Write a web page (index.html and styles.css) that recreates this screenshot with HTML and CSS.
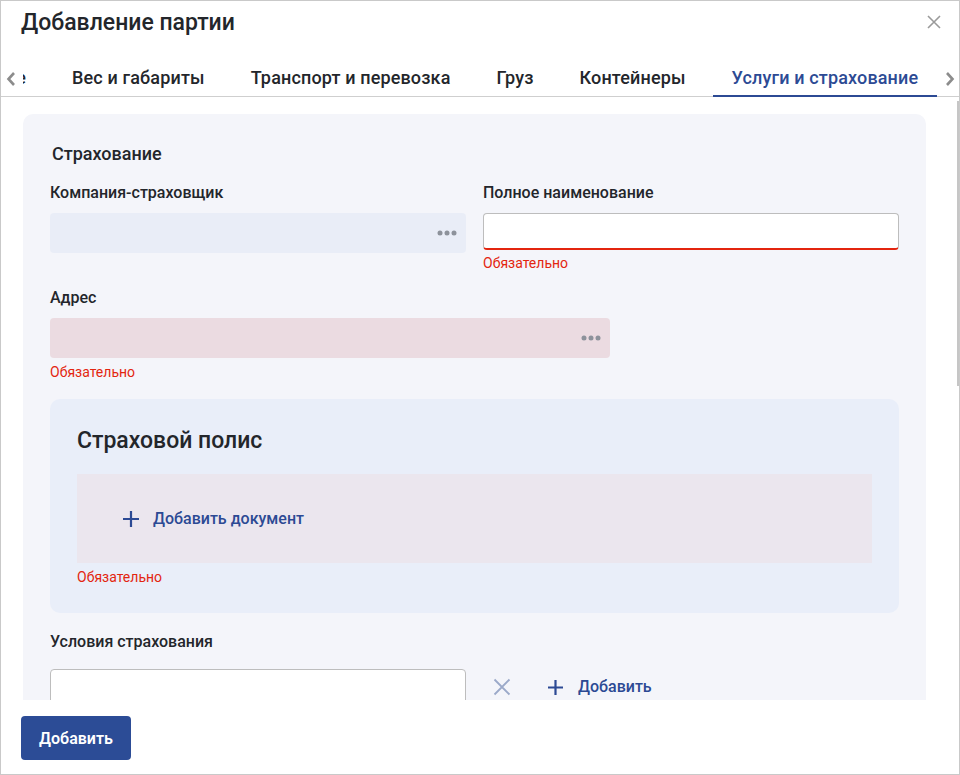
FILE: index.html
```html
<!DOCTYPE html>
<html lang="ru">
<head>
<meta charset="utf-8">
<title>Добавление партии</title>
<link rel="stylesheet" href="styles.css">
</head>
<body>
<div class="dialog">
  <header class="dlg-header">
    <h1 class="dlg-title">Добавление партии</h1>
    <button class="close-btn" aria-label="Закрыть">
      <svg width="14" height="14" viewBox="0 0 14 14"><path d="M1 1L13 13M13 1L1 13" stroke="#9a9a9a" stroke-width="1.6" fill="none"/></svg>
    </button>
  </header>
  <nav class="tabs-row">
    <button class="tab-arrow" aria-label="Назад">
      <svg width="10" height="16" viewBox="0 0 10 16"><path d="M8 2L2.5 8L8 14" stroke="#8c8c8c" stroke-width="2.6" fill="none"/></svg>
    </button>
    <div class="tabs-viewport">
      <div class="tab tab-clipped"><span class="clip-inner">Основное</span></div>
      <div class="tab">Вес и габариты</div>
      <div class="tab">Транспорт и перевозка</div>
      <div class="tab">Груз</div>
      <div class="tab">Контейнеры</div>
      <div class="tab active">Услуги и страхование</div>
    </div>
    <button class="tab-arrow" aria-label="Вперёд">
      <svg width="10" height="16" viewBox="0 0 10 16"><path d="M2 2L7.5 8L2 14" stroke="#8c8c8c" stroke-width="2.6" fill="none"/></svg>
    </button>
  </nav>
  <main class="dlg-body">
    <div class="scroll-thumb"></div>
    <section class="card">
      <h2 class="card-title">Страхование</h2>
      <div class="grid2">
        <div class="field">
          <label class="label">Компания-страховщик</label>
          <div class="picker picker-blue">
            <svg class="dots" width="20" height="6" viewBox="0 0 20 6"><circle cx="3" cy="3" r="2.5" fill="#8d929b"/><circle cx="10" cy="3" r="2.5" fill="#8d929b"/><circle cx="17" cy="3" r="2.5" fill="#8d929b"/></svg>
          </div>
        </div>
        <div class="field">
          <label class="label">Полное наименование</label>
          <div class="text-input text-input-error"></div>
          <div class="error">Обязательно</div>
        </div>
      </div>
      <div class="field field-address">
        <label class="label">Адрес</label>
        <div class="picker picker-pink">
          <svg class="dots" width="20" height="6" viewBox="0 0 20 6"><circle cx="3" cy="3" r="2.5" fill="#8d929b"/><circle cx="10" cy="3" r="2.5" fill="#8d929b"/><circle cx="17" cy="3" r="2.5" fill="#8d929b"/></svg>
        </div>
        <div class="error error-lower">Обязательно</div>
      </div>
      <section class="subcard">
        <h3 class="subcard-title">Страховой полис</h3>
        <div class="dropzone">
          <button class="link-btn">
            <svg width="18" height="18" viewBox="0 0 18 18"><path d="M9 1V17M1 9H17" stroke="#2c4a94" stroke-width="2.2" fill="none"/></svg>
            <span>Добавить документ</span>
          </button>
        </div>
        <div class="error">Обязательно</div>
      </section>
      <div class="field field-terms">
        <label class="label">Условия страхования</label>
        <div class="terms-row">
          <div class="text-input terms-input"></div>
          <button class="icon-btn" aria-label="Удалить">
            <svg width="18" height="18" viewBox="0 0 18 18"><path d="M1.5 1.5L16.5 16.5M16.5 1.5L1.5 16.5" stroke="#9ba9c9" stroke-width="1.8" fill="none"/></svg>
          </button>
          <button class="link-btn link-small">
            <svg width="17" height="17" viewBox="0 0 17 17"><path d="M8.5 1V16M1 8.5H16" stroke="#2c4a94" stroke-width="2.2" fill="none"/></svg>
            <span>Добавить</span>
          </button>
        </div>
      </div>
    </section>
  </main>
  <footer class="dlg-footer">
    <button class="primary-btn">Добавить</button>
  </footer>
</div>
</body>
</html>
```
FILE: styles.css
```css
* { box-sizing: border-box; }
html, body { margin: 0; padding: 0; background: #fff; }
body { font-family: Roboto, "Noto Sans", "Liberation Sans", sans-serif; color: #23262b; }
button { font-family: inherit; background: none; border: 0; padding: 0; cursor: pointer; }

.dialog {
  width: 960px;
  height: 775px;
  border: 1px solid #c9c9c9;
  display: flex;
  flex-direction: column;
  background: #fff;
  overflow: hidden;
}

.dlg-header {
  display: flex;
  align-items: center;
  justify-content: space-between;
  padding: 7px 18px 0 20px;
  height: 36px;
}
.dlg-title {
  margin: 0;
  font-size: 23px;
  line-height: 28px;
  font-weight: 500;
  color: #23262b;
}
.close-btn { width: 14px; height: 14px; display: flex; margin-top: -2px; }

.tabs-row {
  margin-top: 20px;
  height: 40px;
  display: flex;
  align-items: stretch;
  box-shadow: inset 0 -1px 0 #cfcfcf;
}
.tab-arrow {
  width: 20px;
  display: flex;
  align-items: center;
  justify-content: center;
  padding-top: 3px;
}
.tab-arrow:last-child { width: 18px; margin-left: 2px; }
.tabs-viewport {
  flex: 1;
  display: flex;
  gap: 8px;
  overflow: hidden;
}
.tab {
  padding: 9px 19px 5px;
  font-size: 18px;
  line-height: 24px;
  font-weight: 500;
  letter-spacing: 0.15px;
  color: #23262b;
  white-space: nowrap;
  border-bottom: 2px solid transparent;
}
.tab.active { color: #2c4a94; border-bottom-color: #2c4a94; }
.tab-clipped {
  padding-left: 0;
  display: flex;
  justify-content: flex-end;
  width: 24px;
  overflow: hidden;
}
.clip-inner { width: 3px; display: flex; justify-content: flex-end; overflow: hidden; flex: none; }

.dlg-body {
  flex: 1;
  position: relative;
  overflow: hidden;
  padding: 17px 33px 0 22px;
}
.scroll-thumb {
  position: absolute;
  right: 0;
  top: 4px;
  width: 2px;
  height: 285px;
  background: #c6c6c6;
}

.card {
  background: #f4f5fa;
  border-radius: 10px;
  padding: 28px 27px 30px;
}
.card-title {
  margin: 0 0 17px 2px;
  font-size: 18px;
  line-height: 24px;
  font-weight: 500;
}
.grid2 {
  display: grid;
  grid-template-columns: 416px 416px;
  column-gap: 17px;
}
.field { display: flex; flex-direction: column; }
.label {
  font-size: 16px;
  line-height: 20px;
  font-weight: 500;
  color: #23262b;
  margin-bottom: 10px;
}
.picker {
  height: 40px;
  border-radius: 4px;
  display: flex;
  align-items: center;
  justify-content: flex-end;
  padding-right: 9px;
}
.picker-blue { background: #e9edf7; }
.picker-pink { background: #ebdbe1; }
.dots { display: block; }

.text-input {
  height: 37px;
  background: #fff;
  border: 1px solid #bdbdbd;
  border-radius: 4px;
}
.text-input-error { border-bottom: 2px solid #e3250f; }

.error {
  font-size: 14px;
  line-height: 16px;
  color: #e3250f;
  margin-top: 5px;
}
.error-lower { margin-top: 6px; }

.field-address { width: 560px; margin-top: 17px; }

.subcard {
  margin-top: 19px;
  background: #e9eef9;
  border-radius: 10px;
  padding: 28px 27px 28px;
}
.subcard-title {
  margin: 0 0 19px;
  font-size: 23px;
  line-height: 28px;
  font-weight: 500;
  color: #23262b;
}
.dropzone {
  height: 89px;
  background: #ebe6ee;
  display: flex;
  align-items: center;
  padding-left: 45px;
}
.subcard .error { margin-top: 6px; }

.link-btn {
  display: flex;
  align-items: center;
  gap: 13px;
  color: #2c4a94;
  font-size: 16px;
  line-height: 20px;
  font-weight: 500;
}
.link-btn svg { display: block; }
.link-small { gap: 14px; }

.field-terms { margin-top: 19px; }
.field-terms .label { margin-bottom: 17px; }
.terms-row { display: flex; align-items: flex-start; }
.terms-input { width: 416px; height: 40px; }
.icon-btn { margin: 9px 0 0 27px; display: flex; }
.terms-row .link-small { margin: 8px 0 0 36px; }

.dlg-footer {
  height: 74px;
  flex: none;
  padding: 16px 20px 0;
  background: #fff;
}
.primary-btn {
  height: 44px;
  width: 110px;
  border-radius: 4px;
  background: #2c4c96;
  color: #fff;
  font-size: 16px;
  font-weight: 600;
}
```
